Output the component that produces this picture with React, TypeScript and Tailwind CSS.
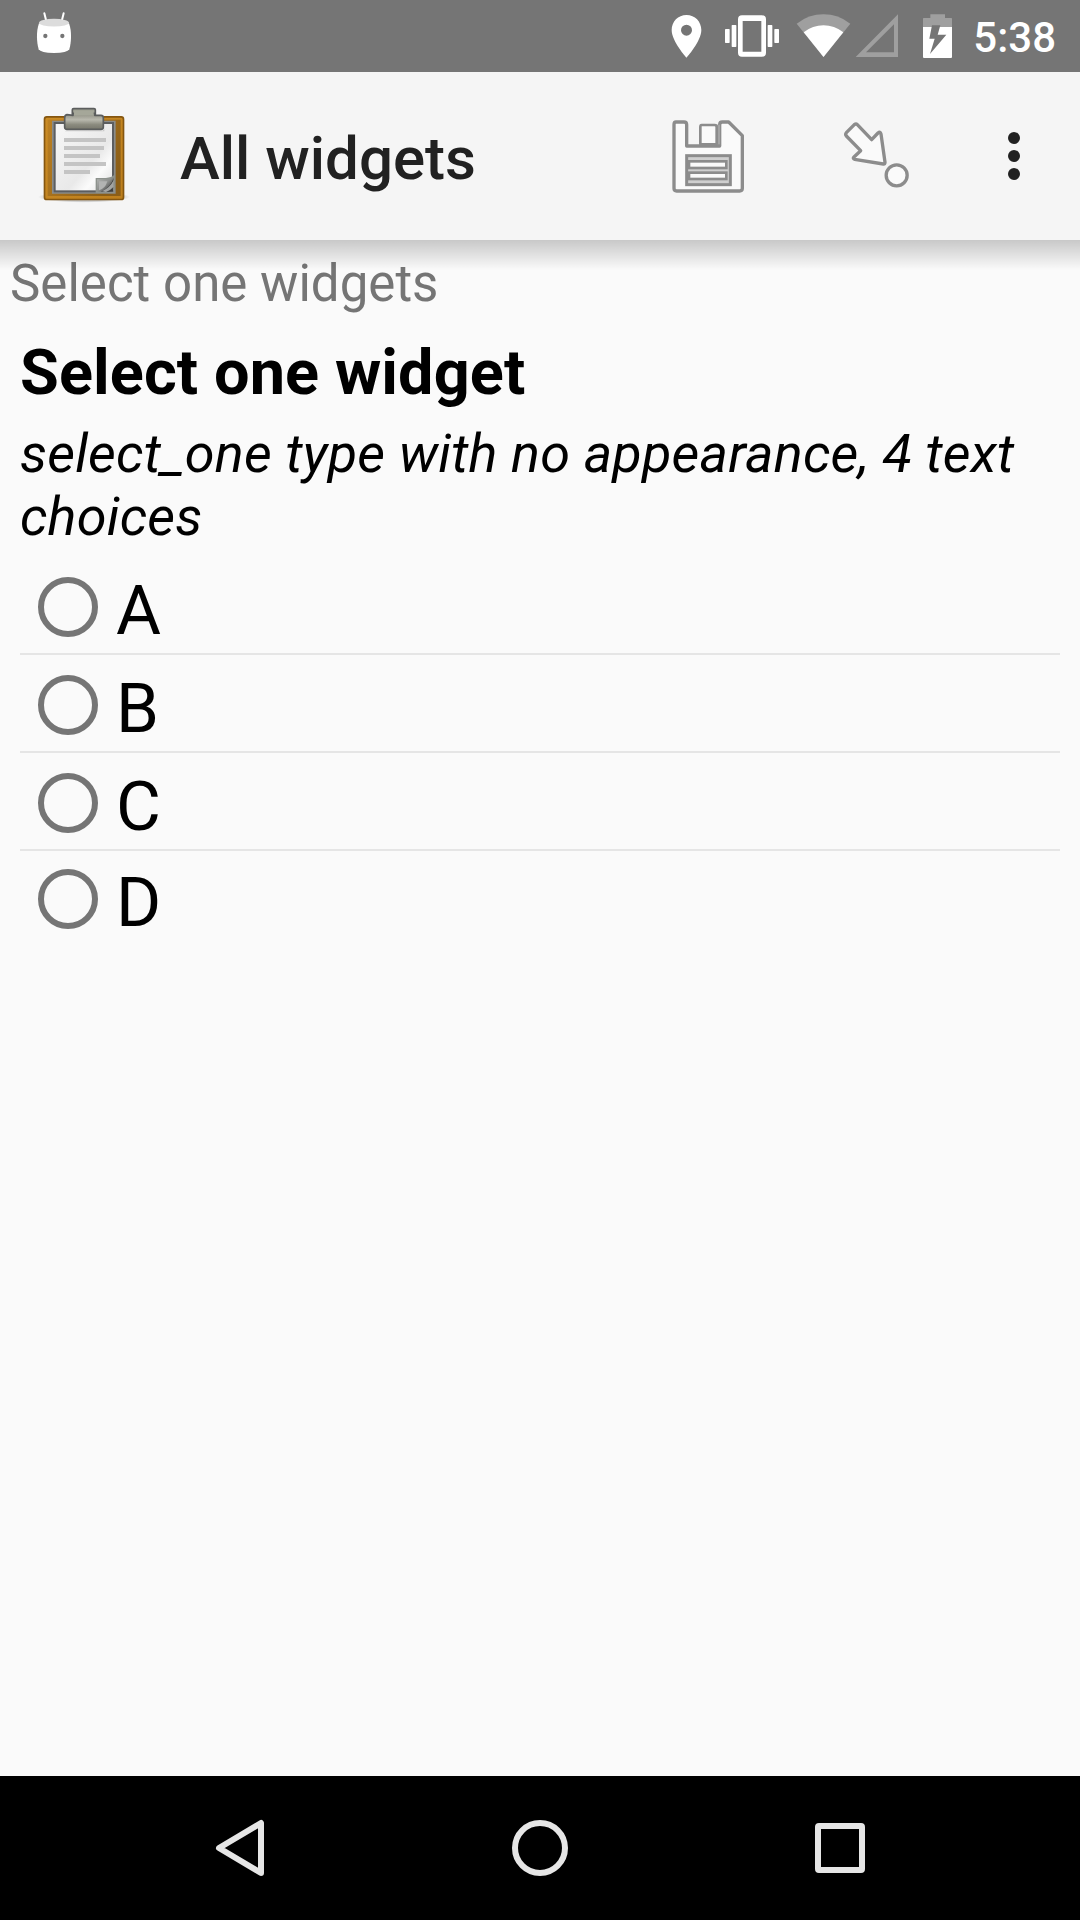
import React from "react";

const choices = [
  { label: "A", row: "h-24.5 pt-5", divider: true },
  { label: "B", row: "h-24.5 pt-5", divider: true },
  { label: "C", row: "h-24.5 pt-5", divider: true },
  { label: "D", row: "h-24 pt-[18px]", divider: false },
];

function AndroidHead() {
  return (
    <svg className="ml-9 h-[72px] w-9" viewBox="108 0 108 216">
      <path d="M133 40L139 64M191 40L185 64" stroke="#fff" strokeWidth="6" strokeLinecap="round" />
      <path d="M117 70C108 94 110 128 116 148Q122 159 162 159Q202 159 208 148C214 128 216 94 207 70Z" fill="#fff" />
      <ellipse cx="162" cy="68" rx="45" ry="11.5" fill="#dcdcdc" />
      <circle cx="136" cy="108" r="6.5" fill="#757575" />
      <circle cx="187" cy="108" r="6.5" fill="#757575" />
    </svg>
  );
}

function StatusIcons() {
  return (
    <svg className="h-[72px] w-[305px]" viewBox="60 0 915 216">
      <path fillRule="evenodd" fill="#fff" d="M109.500 45C84 45 65 65 65 90C65 124 109.500 173 109.500 173S154 124 154 90C154 65 135 45 109.500 45ZM109.500 74A16.500 16.500 0 1 1 109.500 107A16.500 16.500 0 1 1 109.500 74Z" />
      <g fill="#fff">
        <rect x="225" y="87" width="14" height="42" rx="2" />
        <rect x="245" y="75" width="14" height="66" rx="2" />
        <rect x="353" y="75" width="14" height="66" rx="2" />
        <rect x="373" y="87" width="14" height="42" rx="2" />
        <path fillRule="evenodd" d="M276 46H336Q348 46 348 58V158Q348 170 336 170H276Q264 170 264 158V58Q264 46 276 46ZM278 63V155H334V63Z" />
      </g>
      <path d="M440 71Q476 43 520.500 43T601 71L520.500 171Z" fill="#9f9f9f" />
      <path d="M461 97Q488 76 520.500 76T580 97L520.500 171Z" fill="#fff" />
      <path fillRule="evenodd" d="M744 43V171H617ZM732 73L648 157H732Z" fill="#9f9f9f" />
      <path d="M819 81V56Q819 54 821 54H841V43H885V54H904Q906 54 906 56V81Z" fill="#9f9f9f" />
      <path d="M819 81H906V171Q906 174 903 174H822Q819 174 819 171Z" fill="#fff" />
      <path d="M846 76H871L863 104H889L840 162L854 116H838Z" fill="#757575" />
    </svg>
  );
}

function ClipboardIcon() {
  return (
    <svg className="ml-9 h-[168px] w-24" viewBox="108 216 288 504">
      <defs>
        <linearGradient id="board" x1="0" y1="0" x2="1" y2="1">
          <stop offset="0" stopColor="#cb8c25" />
          <stop offset="1" stopColor="#bd7f1d" />
        </linearGradient>
        <linearGradient id="boardInner" x1="0" y1="0" x2="1" y2="0.6">
          <stop offset="0" stopColor="#bd8122" />
          <stop offset="1" stopColor="#8b5e17" />
        </linearGradient>
        <linearGradient id="paper" x1="0" y1="0" x2="1" y2="1">
          <stop offset="0" stopColor="#f7f7f7" />
          <stop offset="0.6" stopColor="#e9e9e9" />
          <stop offset="0.75" stopColor="#fbfbfb" />
          <stop offset="1" stopColor="#dcdcdc" />
        </linearGradient>
        <linearGradient id="clip" x1="0" y1="0" x2="0" y2="1">
          <stop offset="0" stopColor="#8c8c80" />
          <stop offset="0.4" stopColor="#b9b9ae" />
          <stop offset="0.7" stopColor="#8b8b7f" />
          <stop offset="1" stopColor="#77776c" />
        </linearGradient>
        <linearGradient id="fold" x1="0" y1="0" x2="1" y2="1">
          <stop offset="0" stopColor="#b8bab8" />
          <stop offset="0.5" stopColor="#8d8f8d" />
          <stop offset="0.75" stopColor="#555" />
          <stop offset="1" stopColor="#aaa" />
        </linearGradient>
        <radialGradient id="ground">
          <stop offset="0.7" stopColor="#000" stopOpacity="0.22" />
          <stop offset="1" stopColor="#000" stopOpacity="0" />
        </radialGradient>
      </defs>
      <ellipse cx="252" cy="591" rx="138" ry="17" fill="url(#ground)" />
      <rect x="133.500" y="350.500" width="237" height="248" rx="7" fill="url(#board)" stroke="#85560f" strokeWidth="5" />
      <rect x="143" y="359" width="219" height="229" fill="url(#boardInner)" />
      <path d="M156 362H347V581H156Z" fill="#8a8c8a" />
      <rect x="164" y="369" width="175" height="205" fill="url(#paper)" stroke="#5c5e60" strokeWidth="6" />
      <g fill="#c4c4c4">
        <rect x="192" y="414" width="126" height="12" />
        <rect x="192" y="438" width="120" height="12" />
        <rect x="192" y="462" width="108" height="12" />
        <rect x="192" y="486" width="126" height="12" />
        <rect x="192" y="510" width="78" height="12" />
      </g>
      <path d="M289 577V536H318Q336 534 342 528V577Z" fill="url(#fold)" stroke="#8d928d" strokeWidth="4" />
      <path d="M297 571V544H322Q316 566 297 571Z" fill="#b2b3b2" />
      <path d="M303 575Q332 562 341 533Q336 560 340 575Z" fill="#3f4040" />
      <path d="M306 574Q330 563 341 541V560Q330 572 318 576Z" fill="#a3a4a3" />
      <path d="M217 348V329Q217 326 221 326H282Q286 326 286 329V348Z" fill="#a0a294" stroke="#5b5d5d" strokeWidth="5" />
      <path d="M197 392H308Q314 390 313 382V394H194Z" fill="#000" opacity="0.15" />
      <path d="M219 346V340H284V346H303Q310 346 310 353V381Q310 388 303 388H201Q194 388 194 381V353Q194 346 201 344Z" fill="url(#clip)" stroke="#5b5d5d" strokeWidth="5" strokeLinejoin="round" />
      <path d="M222 333H281V346H222Z" fill="#a5a799" />
    </svg>
  );
}

function SaveIcon() {
  return (
    <svg className="h-[168px] w-[78px]" viewBox="57 -54 234 504" fill="#fafafa" stroke="#8c8c8c" strokeWidth="10" strokeLinejoin="round">
      <path d="M78 96H102Q110 96 110 104V168H209V104Q209 96 217 96H236L277 137V295Q277 303 269 303H80Q72 303 72 295V104Q72 96 78 96Z" />
      <path d="M200 104H210V163H200Z" fill="#a4a4a4" stroke="none" />
      <path d="M155 105H194Q200 105 200 111V163H151V111Q151 105 155 105Z" strokeWidth="8" />
      <rect x="110" y="197" width="131" height="87" fill="#cfcfcf" strokeWidth="9" strokeLinejoin="miter" />
      <rect x="117" y="214" width="112" height="20" strokeWidth="8" strokeLinejoin="miter" />
      <rect x="117" y="248" width="112" height="19" strokeWidth="8" strokeLinejoin="miter" />
    </svg>
  );
}

function JumpIcon() {
  return (
    <svg className="h-[168px] w-[72px]" viewBox="573 -54 216 504" fill="#fafafa" stroke="#8c8c8c" strokeWidth="10" strokeLinejoin="round">
      <path d="M613 104Q618 100 622 104L665 149L684 129Q691 123 693 132L705 217Q705 223 700 222L614 208Q607 206 612 201L632 182L589 138Q585 133 589 128Z" />
      <circle cx="740" cy="256" r="31.500" />
    </svg>
  );
}

function OverflowIcon() {
  return (
    <div className="flex flex-col gap-1.5">
      <i className="size-3 rounded-full bg-[#212121]" />
      <i className="size-3 rounded-full bg-[#212121]" />
      <i className="size-3 rounded-full bg-[#212121]" />
    </div>
  );
}

export default function App() {
  return (
    <div className="flex h-[1920px] w-[1080px] flex-col overflow-hidden bg-[#fafafa] font-['Roboto',sans-serif]">
      <header className="flex h-18 shrink-0 items-center bg-[#757575] text-white">
        <AndroidHead />
        <div className="ml-auto flex items-center pr-6">
          <StatusIcons />
          <span className="-ml-0.5 pt-1 text-[42px] leading-[48px] font-medium">5:38</span>
        </div>
      </header>

      <div className="relative z-10 flex h-42 shrink-0 items-center bg-[#f5f5f5]">
        <ClipboardIcon />
        <h1 className="ml-12 pt-[5px] text-[60px] leading-[70px] font-medium text-[#212121]">All widgets</h1>
        <div className="ml-auto flex items-center pr-15">
          <SaveIcon />
          <div className="ml-[94px]">
            <JumpIcon />
          </div>
          <div className="ml-[95px]">
            <OverflowIcon />
          </div>
        </div>
        <div className="absolute inset-x-0 top-full h-[30px] bg-linear-to-b from-black/20 to-transparent" />
      </div>

      <main className="relative flex-1">
        <p className="px-2.5 pt-3.5 text-[51px] leading-[60px] tracking-[0.03px] text-[#757575]">Select one widgets</p>
        <section className="px-5 pt-[22px] text-black">
          <h2 className="text-[63px] leading-[74px] font-bold tracking-[0.1px]">Select one widget</h2>
          <p className="pt-3 text-[54px] leading-[63px] tracking-[0.19px] italic">
            select_one type with no appearance, 4 text choices
          </p>
          <ul className="pt-[9px]">
            {choices.map((c) => (
              <li
                key={c.label}
                className={`flex items-start pl-[18px] ${c.row} ${c.divider ? "border-b-2 border-[#e5e5e5]" : ""}`}
              >
                <span className="size-15 rounded-full border-[6px] border-[#757575]" />
                <span className="-mt-1.5 ml-[18px] text-[69px] leading-[80px]">{c.label}</span>
              </li>
            ))}
          </ul>
        </section>
      </main>

      <nav className="flex h-36 shrink-0 items-center justify-center gap-60 bg-black">
        <svg className="size-15" viewBox="0 0 60 60" fill="none" stroke="#e6e6e6" strokeWidth="6" strokeLinejoin="round">
          <path d="M51 5V55L9 30Z" />
        </svg>
        <svg className="size-15" viewBox="0 0 60 60" fill="none" stroke="#e6e6e6" strokeWidth="6">
          <circle cx="30" cy="30" r="25" />
        </svg>
        <svg className="size-15" viewBox="0 0 60 60" fill="none" stroke="#e6e6e6" strokeWidth="6">
          <rect x="8" y="8" width="44" height="44" rx="1" />
        </svg>
      </nav>
    </div>
  );
}
